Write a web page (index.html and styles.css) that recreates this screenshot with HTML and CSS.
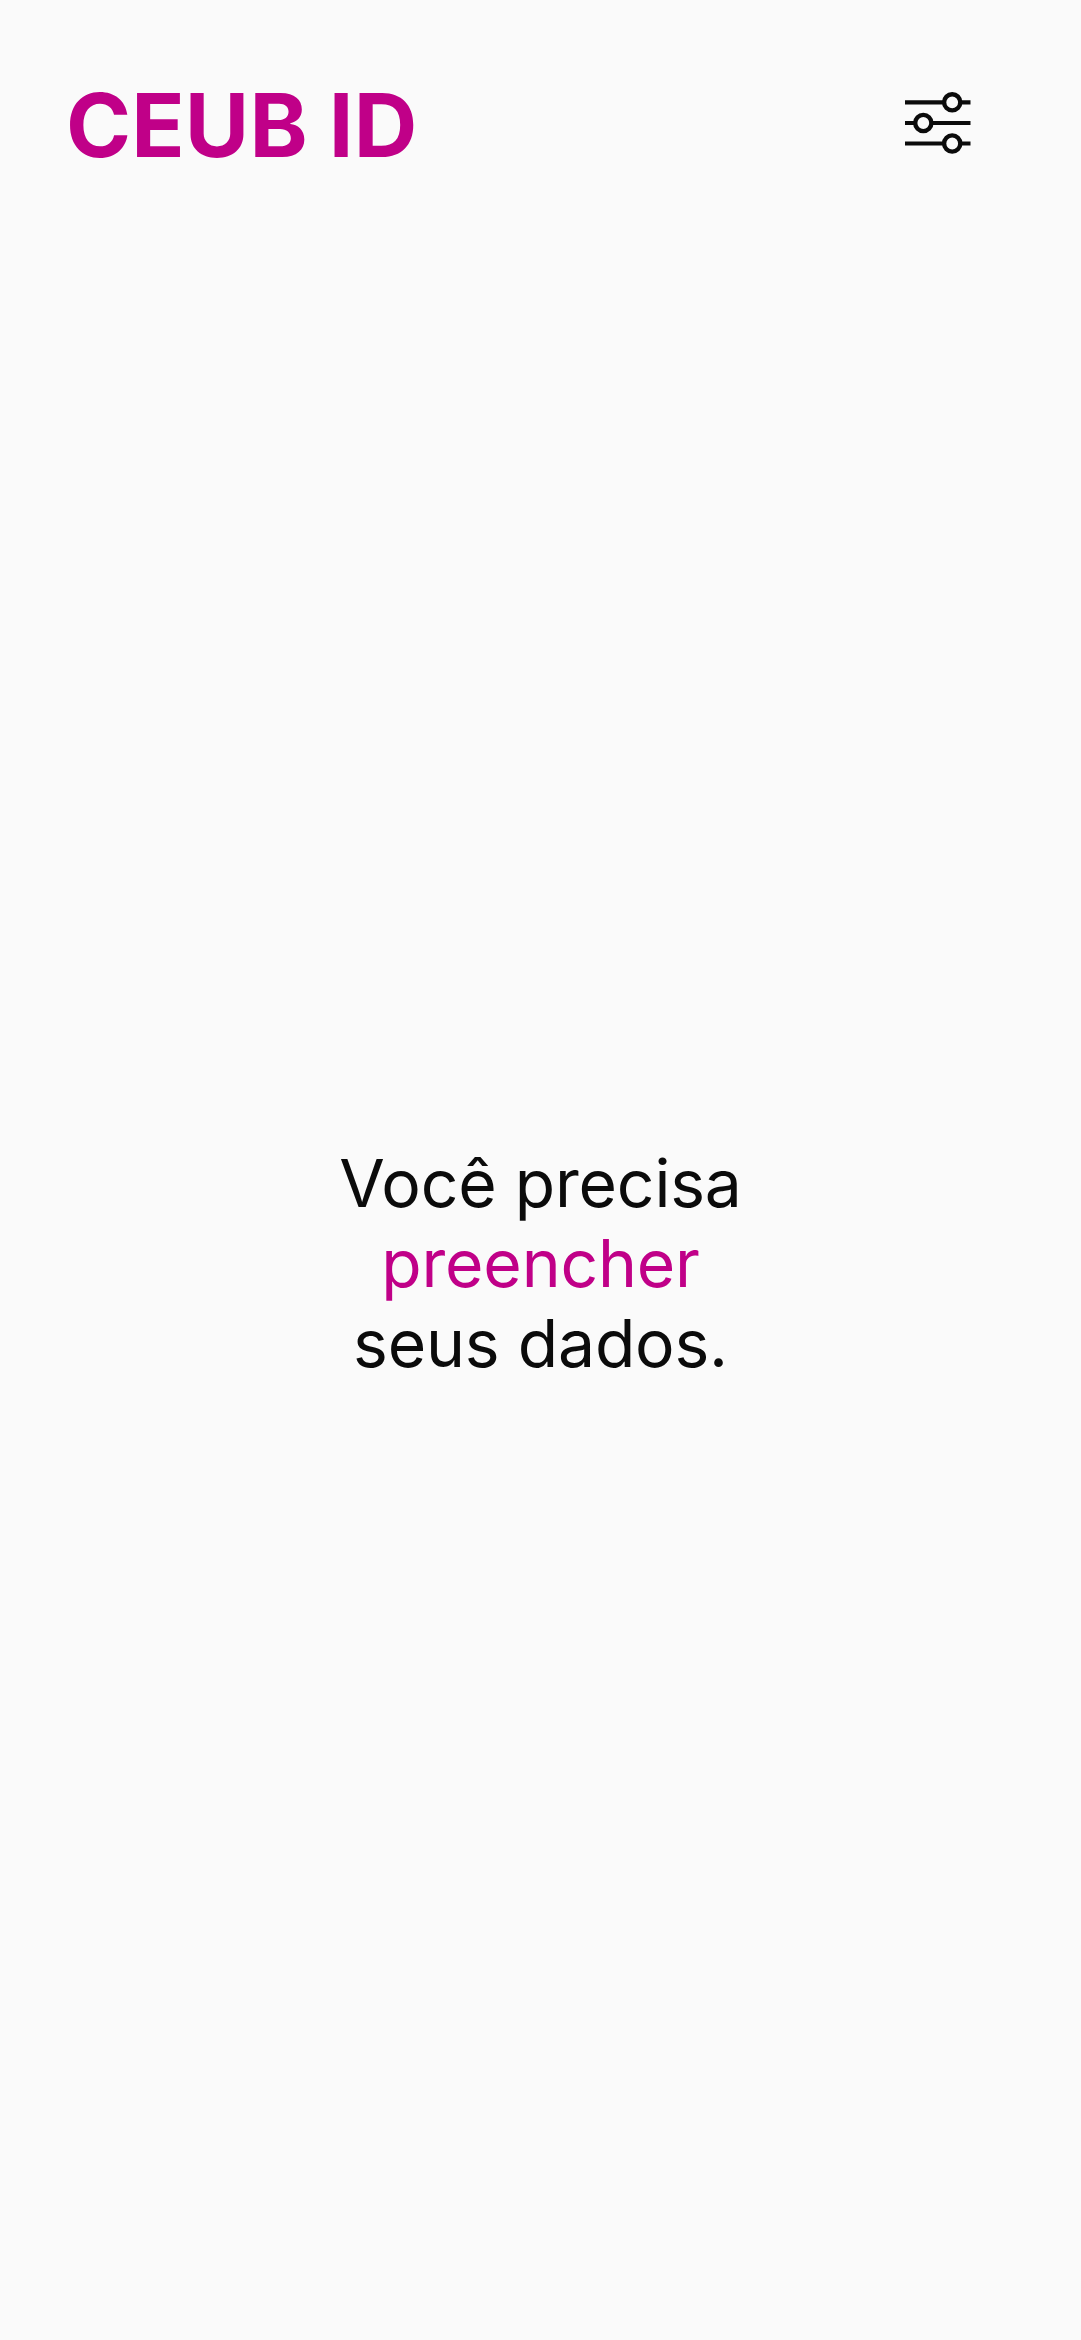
FILE: index.html
```html
<!DOCTYPE html>
<html lang="pt-BR">
<head>
<meta charset="utf-8">
<title>CEUB ID</title>
<link rel="stylesheet" href="styles.css">
</head>
<body>
<header class="header">
<h1 class="title">CEUB ID</h1>
<button class="settings" aria-label="Ajustes">
<svg class="icon" viewBox="0 0 66 62" fill="none" stroke="#0b0b0b" stroke-width="4.2">
<path d="M0 10.300H39M55.500 10.300H65.500M0 31H10M26.500 31H65.500M0 51.500H39M55.500 51.500H65.500"/>
<g stroke-width="4.400"><circle cx="47.200" cy="10.300" r="8.100"/><circle cx="18.300" cy="31" r="8.100"/><circle cx="47.200" cy="51.500" r="8.100"/></g>
</svg>
</button>
</header>
<main class="content">
<p class="message">Você precisa<br><span class="accent">preencher</span><br>seus dados.</p>
</main>
</body>
</html>
```
FILE: styles.css
```css
body { margin: 0; min-height: 2340px; background: #fafafa; color: #0b0b0b; font-family: Inter, "Liberation Sans", sans-serif; display: flex; flex-direction: column; }
.header { display: flex; justify-content: space-between; align-items: flex-start; height: 160px; box-sizing: border-box; padding: 72px 110px 0 66px; }
.title { margin: 0; color: #c00088; font-size: 88px; line-height: 107px; font-weight: 700; letter-spacing: 0.15px; white-space: nowrap; }
.settings { display: flex; margin: 20px 0 0; padding: 0; border: 0; background: none; }
.icon { display: block; width: 66px; height: 62px; overflow: visible; }
.content { display: flex; justify-content: center; padding-top: 983px; }
.message { margin: 0; text-align: center; font-size: 66px; line-height: 80px; font-weight: 400; letter-spacing: -0.2px; }
.accent { color: #c00088; }
```
